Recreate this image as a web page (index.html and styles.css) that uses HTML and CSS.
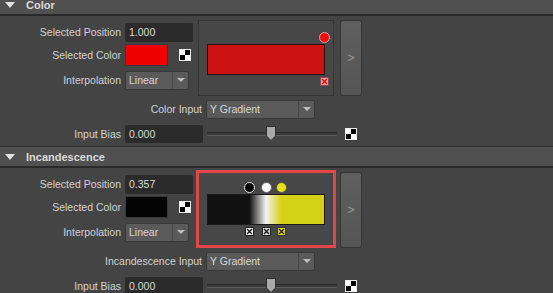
FILE: index.html
```html
<!DOCTYPE html>
<html lang="en">
<head>
  <meta charset="UTF-8" />
  <title>Ramp Attributes</title>
  <link rel="stylesheet" href="styles.css">
</head>
<body>
  <div class="editor">

    <section class="group">
      <div class="group-head"><span class="caret"></span>Color</div>
      <div class="group-body">
        <div class="ramp-area">
          <div class="fields">
            <div class="row"><label class="lbl">Selected Position</label><div class="field w-pos">1.000</div></div>
            <div class="row row-color"><label class="lbl">Selected Color</label><div class="swatch" style="background:#ee0000"></div>
              <svg class="checker" viewBox="0 0 12 12"><rect x="0.5" y="0.5" width="11" height="11" fill="#fff" stroke="#eee"/><rect x="6" y="1" width="5" height="5" fill="#000"/><rect x="1" y="6" width="5" height="5" fill="#000"/></svg>
            </div>
            <div class="row"><label class="lbl">Interpolation</label><div class="combo w-interp"><span>Linear</span><i class="arrow"></i></div></div>
          </div>
          <div class="ramp">
            <div class="ramp-bar" style="background:#cc1212">
              <span class="dot" style="left:100%;background:#ee0e0e"></span>
              <svg class="mark" style="left:100%" viewBox="0 0 9 9"><rect x="0.5" y="0.5" width="8" height="8" fill="#e9a3a3" stroke="#8a4a4a"/><path d="M2 2L7 7M7 2L2 7" stroke="#dd1010" stroke-width="1.4"/></svg>
            </div>
          </div>
          <button class="expand">&gt;</button>
        </div>
        <div class="row row-wide"><label class="lbl lbl-wide">Color Input</label><div class="combo w-input"><span>Y Gradient</span><i class="arrow"></i></div></div>
        <div class="row row-bias"><label class="lbl">Input Bias</label><div class="field w-bias">0.000</div>
          <div class="slider"><span class="thumb"><svg viewBox="0 0 10 15"><path d="M0.5 0.5H9.5V10L5 14.5L0.5 10Z" fill="#a9a9a9" stroke="#303030"/></svg></span></div>
          <svg class="checker gap" viewBox="0 0 12 12"><rect x="0.5" y="0.5" width="11" height="11" fill="#fff" stroke="#eee"/><rect x="6" y="1" width="5" height="5" fill="#000"/><rect x="1" y="6" width="5" height="5" fill="#000"/></svg>
        </div>
      </div>
    </section>

    <section class="group">
      <div class="group-head"><span class="caret"></span>Incandescence</div>
      <div class="group-body">
        <div class="ramp-area">
          <div class="fields">
            <div class="row"><label class="lbl">Selected Position</label><div class="field w-pos">0.357</div></div>
            <div class="row row-color"><label class="lbl">Selected Color</label><div class="swatch" style="background:#030303"></div>
              <svg class="checker" viewBox="0 0 12 12"><rect x="0.5" y="0.5" width="11" height="11" fill="#fff" stroke="#eee"/><rect x="6" y="1" width="5" height="5" fill="#000"/><rect x="1" y="6" width="5" height="5" fill="#000"/></svg>
            </div>
            <div class="row"><label class="lbl">Interpolation</label><div class="combo w-interp"><span>Linear</span><i class="arrow"></i></div></div>
          </div>
          <div class="ramp picked">
            <div class="ramp-bar glow">
              <span class="dot" style="left:35.7%;background:#000;border-color:#e8e8e8"></span>
              <span class="dot" style="left:50%;background:#fafafa;border-color:#666"></span>
              <span class="dot" style="left:63%;background:#e6e21a;border-color:#555"></span>
              <svg class="mark" style="left:35.7%" viewBox="0 0 9 9"><rect x="0.5" y="0.5" width="8" height="8" fill="#eee" stroke="#222"/><path d="M2 2L7 7M7 2L2 7" stroke="#111" stroke-width="1.3"/></svg>
              <svg class="mark" style="left:50%" viewBox="0 0 9 9"><rect x="0.5" y="0.5" width="8" height="8" fill="#ddd" stroke="#222"/><path d="M2 2L7 7M7 2L2 7" stroke="#111" stroke-width="1.3"/></svg>
              <svg class="mark" style="left:63%" viewBox="0 0 9 9"><rect x="0.5" y="0.5" width="8" height="8" fill="#dcd51e" stroke="#333"/><path d="M2 2L7 7M7 2L2 7" stroke="#222" stroke-width="1.3"/></svg>
            </div>
          </div>
          <button class="expand">&gt;</button>
        </div>
        <div class="row row-wide"><label class="lbl lbl-wide">Incandescence Input</label><div class="combo w-input"><span>Y Gradient</span><i class="arrow"></i></div></div>
        <div class="row row-bias"><label class="lbl">Input Bias</label><div class="field w-bias">0.000</div>
          <div class="slider"><span class="thumb"><svg viewBox="0 0 10 15"><path d="M0.5 0.5H9.5V10L5 14.5L0.5 10Z" fill="#a9a9a9" stroke="#303030"/></svg></span></div>
          <svg class="checker gap" viewBox="0 0 12 12"><rect x="0.5" y="0.5" width="11" height="11" fill="#fff" stroke="#eee"/><rect x="6" y="1" width="5" height="5" fill="#000"/><rect x="1" y="6" width="5" height="5" fill="#000"/></svg>
        </div>
      </div>
    </section>

  </div>
</body>
</html>
```

FILE: styles.css
```css
* {
  margin: 0;
  padding: 0;
  box-sizing: border-box;
}
body {
  background-color: #444444;
  color: #d2d2d2;
  font-family: "Liberation Sans", Arial, sans-serif;
  font-size: 10.5px;
  overflow: hidden;
}
.editor {
  margin-top: -6px;
}
.group-head {
  height: 22px;
  display: flex;
  align-items: center;
  background-color: #505050;
  border-top: 1px solid #2e2e2e;
  border-bottom: 2px solid #2a2a2a;
  font-size: 11px;
  font-weight: bold;
  color: #dadada;
}
.caret {
  width: 0;
  height: 0;
  margin: 0 11px 0 5px;
  border-left: 5px solid transparent;
  border-right: 5px solid transparent;
  border-top: 6px solid #e0e0e0;
}
.group-body {
  padding: 4px 0 3px;
}
.ramp-area {
  display: flex;
  align-items: flex-start;
}
.fields {
  width: 193px;
  padding-top: 2px;
  display: flex;
  flex-direction: column;
  gap: 2px;
}
.fields .row:last-child {
  margin-top: 2px;
}
.row {
  display: flex;
  align-items: center;
  height: 20px;
}
.row-color {
  height: 22px;
}
.lbl {
  width: 125px;
  flex: none;
  padding-right: 4px;
  text-align: right;
  white-space: nowrap;
}
.lbl-wide {
  width: 206px;
}
.field {
  height: 19px;
  line-height: 19px;
  padding-left: 4px;
  background-color: #2b2b2b;
  border-radius: 2px;
  color: #dcdcdc;
}
.w-pos {
  width: 68px;
}
.w-bias {
  width: 78px;
}
.swatch {
  width: 43px;
  height: 22px;
  border: 1px solid #383838;
}
.checker {
  width: 12px;
  height: 12px;
  margin-left: 11px;
}
.checker.gap {
  margin-left: 8px;
}
.combo {
  height: 19px;
  display: flex;
  background-color: #5a5a5a;
  border: 1px solid #383838;
  border-radius: 2px;
  color: #d8d8d8;
}
.combo span {
  flex: 1;
  padding-left: 3px;
  line-height: 17px;
}
.combo .arrow {
  width: 16px;
  display: flex;
  align-items: center;
  justify-content: center;
  border-left: 1px solid #474747;
}
.combo .arrow::after {
  content: "";
  border-left: 4px solid transparent;
  border-right: 4px solid transparent;
  border-top: 4px solid #bdbdbd;
}
.w-interp {
  width: 64px;
}
.w-input {
  width: 109px;
}
.ramp {
  width: 136px;
  height: 76px;
  margin-left: 5px;
  padding: 23px 8px 0;
  background-color: #474747;
  border: 1px solid #353535;
}
.ramp.picked {
  border-color: #e24646;
  box-shadow: 0 0 0 2px #e24646;
  height: 74px;
  padding-top: 21px;
}
.ramp-bar {
  position: relative;
  height: 31px;
  border: 1px solid #261010;
}
.ramp-bar.glow {
  border-color: #1a1a1a;
  background: linear-gradient(to right, #111 0%, #111 35.7%, #f4f4f4 50%, #d6d218 63%, #d4d017 100%);
}
.dot {
  position: absolute;
  top: -13px;
  width: 11px;
  height: 11px;
  margin-left: -5px;
  border: 1px solid #e6a0a0;
  border-radius: 50%;
}
.mark {
  position: absolute;
  bottom: -12px;
  width: 9px;
  height: 9px;
  margin-left: -4px;
}
.expand {
  width: 22px;
  height: 76px;
  margin-left: 6px;
  background: linear-gradient(#5f5f5f, #555555);
  border: 1px solid #363636;
  border-radius: 3px;
  color: #9c9c9c;
  font-family: "Liberation Sans", Arial, sans-serif;
  font-size: 12px;
}
.row-wide {
  margin-top: 3px;
}
.picked + .expand {
  margin-top: 0;
}
.row-bias {
  margin-top: 6px;
  height: 18px;
}
.row-bias .field {
  height: 18px;
  line-height: 18px;
}
.slider {
  position: relative;
  width: 130px;
  height: 4px;
  margin-left: 4px;
  background-color: #3a3a3a;
  border-top: 1px solid #2a2a2a;
  border-bottom: 1px solid #5c5c5c;
}
.thumb {
  position: absolute;
  left: 59px;
  top: -7px;
  width: 10px;
  height: 15px;
}
.thumb svg {
  display: block;
  width: 10px;
  height: 15px;
}
```
